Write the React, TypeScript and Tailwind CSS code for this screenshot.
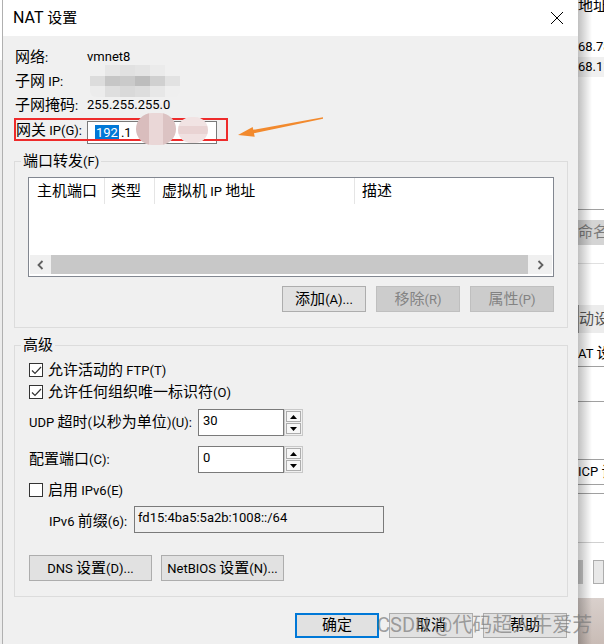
import React from "react";

// CJK runs are drawn a bit larger than latin runs, like YaHei UI next to Segoe UI
const CJK_RE = /([\u2e80-\u9fff\uff00-\uffef]+)/;

function T({ s }: { s: string }) {
  const parts = s.split(CJK_RE).filter((p) => p !== "");
  return (
    <span className="whitespace-pre">
      {parts.map((p, i) =>
        CJK_RE.test(p) ? (
          <span key={i} className="text-[15px]">
            {p}
          </span>
        ) : (
          <span key={i}>{p}</span>
        )
      )}
    </span>
  );
}

interface BtnProps {
  label: string;
  w?: string;
  h?: string;
  disabled?: boolean;
  primary?: boolean;
}

function Btn({ label, w = "w-[84px]", h = "h-[26px]", disabled, primary }: BtnProps) {
  const base = "flex items-center justify-center shrink-0 leading-none";
  const look = disabled
    ? "bg-[#cccccc] border border-[#bfbfbf] text-[#838383]"
    : primary
      ? "bg-[#e1e1e1] border-2 border-[#0078d7]"
      : "bg-[#e1e1e1] border border-[#adadad]";
  return (
    <div className={`${base} ${look} ${w} ${h}`}>
      <T s={label} />
    </div>
  );
}

function Check({ checked }: { checked?: boolean }) {
  return (
    <div className="w-[14px] h-[14px] border border-[#333333] bg-white flex items-center justify-center shrink-0">
      {checked && (
        <svg width="11" height="9" viewBox="0 0 11 9">
          <path d="M1 4.5 L4 7.5 L10 1" fill="none" stroke="#333" strokeWidth="1.2" />
        </svg>
      )}
    </div>
  );
}

function Spin() {
  return (
    <div className="w-[19px] h-[27px] border border-[#c8c8c8] bg-[#f0f0f0] flex flex-col p-[1px] gap-[1px]">
      <div className="flex-1 bg-[#f7f7f7] border border-[#adadad] flex items-center justify-center">
        <svg width="7" height="4" viewBox="0 0 7 4">
          <path d="M0 4 L3.5 0 L7 4 Z" fill="#000" />
        </svg>
      </div>
      <div className="flex-1 bg-[#f7f7f7] border border-[#adadad] flex items-center justify-center">
        <svg width="7" height="4" viewBox="0 0 7 4">
          <path d="M0 0 L7 0 L3.5 4 Z" fill="#000" />
        </svg>
      </div>
    </div>
  );
}

function InfoRow({ label, children }: { label: string; children: React.ReactNode }) {
  return (
    <div className="h-[24px] flex items-center">
      <div className="w-[73px] pl-[1px]">
        <T s={label} />
      </div>
      {children}
    </div>
  );
}

const mosaic = [
  ["#f0f0f0", "#e6e6e6", "#e1e1e1", "#e4e4e4", "#ebebeb", "#f0f0f0"],
  ["#dcdcdc", "#c6c6c6", "#cacaca", "#bdbdbd", "#d0d0d0", "#e2e2e2"],
  ["#ececec", "#dedede", "#d9d9d9", "#dddddd", "#e7e7e7", "#efefef"],
];

function SpinRow({ label, value, className }: { label: string; value: string; className: string }) {
  return (
    <div className={`h-[27px] flex items-center ${className}`}>
      <div className="w-[169px]">
        <T s={label} />
      </div>
      <div className="w-[86px] h-[27px] border border-[#7a7a7a] bg-white pl-[4px] leading-[22px]">{value}</div>
      <Spin />
    </div>
  );
}

function Chevron({ dir }: { dir: "l" | "r" }) {
  return (
    <svg width="7" height="10" viewBox="0 0 7 10">
      <path
        d={dir === "l" ? "M5.5 1 L1.5 5 L5.5 9" : "M1.5 1 L5.5 5 L1.5 9"}
        fill="none"
        stroke="#606060"
        strokeWidth="1.8"
      />
    </svg>
  );
}

function Dialog() {
  return (
    <div className="w-[575px] h-full flex flex-col">
      {/* title bar */}
      <div className="h-[36px] bg-white flex items-center justify-between pl-[10px] pr-[14px] shrink-0">
        <div className="leading-none">
          <span className="text-[16px]">NAT </span>
          <span className="text-[15px]">设置</span>
        </div>
        <svg width="14" height="14" viewBox="0 0 14 14">
          <path d="M1 1 L13 13 M13 1 L1 13" stroke="#000" strokeWidth="1" />
        </svg>
      </div>

      <div className="flex-1 bg-[#f0f0f0] pl-[11px] pr-[10px] flex flex-col">
        {/* network info */}
        <div className="pt-[9px]">
          <InfoRow label="网络:">
            <span>vmnet8</span>
          </InfoRow>
          <InfoRow label="子网 IP:">
            <div className="ml-[3px] w-[90px] h-[32px] flex flex-col rounded-[6px] overflow-hidden">
              {mosaic.map((row, r) => (
                <div key={r} className="flex-1 flex">
                  {row.map((c, i) => (
                    <div key={i} className="flex-1" style={{ background: c }} />
                  ))}
                </div>
              ))}
            </div>
          </InfoRow>
          <InfoRow label="子网掩码:">
            <span>255.255.255.0</span>
          </InfoRow>
          <div className="relative h-[27px] flex">
            <div className="w-[73px] pl-[2px] pt-[3px] leading-[20px]">
              <T s="网关 IP(G):" />
            </div>
            <div className="mt-[4px] w-[130px] h-[23px] border border-[#7a7a7a] bg-white flex items-center pl-[7px]">
              <span className="bg-[#0078d7] text-white leading-[15px] px-[1px]">192</span>
              <span className="ml-[2px]">.1</span>
            </div>
            {/* annotation */}
            <div className="absolute left-0 top-[1px] w-[214px] h-[23px] border-2 border-[#ee2b2b]" />
            <div className="absolute left-[122px] -top-[4px] w-[40px] h-[32px] rounded-full overflow-hidden flex">
              <div className="flex-1 bg-[#d9bdbd]" />
              <div className="flex-1 bg-[#ead7d7]" />
              <div className="flex-1 bg-[#dcc3c3]" />
            </div>
            <div className="absolute left-[164px] top-0 w-[30px] h-[26px] rounded-full overflow-hidden flex flex-col">
              <div className="flex-1 bg-[#f1e3e3]" />
              <div className="flex-1 bg-[#e9d3d3]" />
              <div className="flex-1 bg-[#f0e1e1]" />
            </div>
          </div>
        </div>

        {/* port forwarding */}
        <div className="relative mt-[17px] h-[167px] border border-[#dcdcdc] pt-[15px] pl-[13px] shrink-0">
          <div className="absolute -top-[11px] left-[6px] px-[2px] bg-[#f0f0f0] leading-[20px]">
            <T s="端口转发(F)" />
          </div>
          <div className="w-[526px] h-[100px] border border-[#828790] bg-white flex flex-col">
            <div className="h-[26px] flex">
              <div className="w-[76px] pl-[8px] border-r border-[#e5e5e5] flex items-center">
                <T s="主机端口" />
              </div>
              <div className="w-[50px] pl-[6px] border-r border-[#e5e5e5] flex items-center">
                <T s="类型" />
              </div>
              <div className="w-[200px] pl-[7px] border-r border-[#e5e5e5] flex items-center">
                <T s="虚拟机 IP 地址" />
              </div>
              <div className="flex-1 pl-[7px] flex items-center">
                <T s="描述" />
              </div>
            </div>
            <div className="flex-1" />
            <div className="h-[19px] mb-[2px] mx-[1px] flex bg-[#f0f0f0]">
              <div className="w-[21px] flex items-center justify-center">
                <Chevron dir="l" />
              </div>
              <div className="flex-1 bg-[#c8c8c8]" />
              <div className="w-[24px] flex items-center justify-center">
                <Chevron dir="r" />
              </div>
            </div>
          </div>
          <div className="mt-[9px] w-[526px] flex justify-end gap-[10px]">
            <Btn label="添加(A)..." />
            <Btn label="移除(R)" disabled />
            <Btn label="属性(P)" disabled />
          </div>
        </div>

        {/* advanced */}
        <div className="relative mt-[17px] h-[252px] border border-[#dcdcdc] pl-[14px] pt-[13px] flex flex-col shrink-0">
          <div className="absolute -top-[11px] left-[6px] px-[2px] bg-[#f0f0f0] leading-[20px]">
            <T s="高级" />
          </div>
          <div className="h-[22px] flex items-center gap-[5px]">
            <Check checked />
            <T s="允许活动的 FTP(T)" />
          </div>
          <div className="h-[22px] flex items-center gap-[5px]">
            <Check checked />
            <T s="允许任何组织唯一标识符(O)" />
          </div>
          <SpinRow className="mt-[6px]" label="UDP 超时(以秒为单位)(U):" value="30" />
          <SpinRow className="mt-[10px]" label="配置端口(C):" value="0" />
          <div className="mt-[6px] h-[22px] flex items-center gap-[5px]">
            <Check />
            <T s="启用 IPv6(E)" />
          </div>
          <div className="mt-[5px] h-[27px] flex items-center pl-[20px]">
            <div className="w-[85px] pt-[4px]">
              <T s="IPv6 前缀(6):" />
            </div>
            <div className="w-[250px] h-[27px] border border-[#7a7a7a] bg-[#f0f0f0] pl-[3px] leading-[22px]">
              fd15:4ba5:5a2b:1008::/64
            </div>
          </div>
          <div className="mt-[22px] flex gap-[9px]">
            <Btn label="DNS 设置(D)..." w="w-[123px]" />
            <Btn label="NetBIOS 设置(N)..." w="w-[123px]" />
          </div>
        </div>

        {/* dialog buttons */}
        <div className="mt-[16px] flex justify-end gap-[10px] pr-[1px]">
          <Btn label="确定" h="h-[25px]" primary />
          <Btn label="取消" h="h-[25px]" />
          <Btn label="帮助" h="h-[25px]" />
        </div>
      </div>
    </div>
  );
}

function BackWindow() {
  return (
    <div className="relative w-[26px] h-full bg-white flex flex-col overflow-hidden text-[13px] whitespace-nowrap">
      <div className="h-[14px] flex items-end overflow-hidden">
        <span className="text-[15px] leading-[15px]">地址</span>
      </div>
      <div className="h-[23px]" />
      <div className="h-[20px] leading-[20px]">68.78</div>
      <div className="h-[20px] leading-[20px] bg-[#f0f0f0]">68.11</div>
      <div className="h-[132px]" />
      <div className="h-px bg-[#a0a0a0]" />
      <div className="h-[10px]" />
      <div className="h-[25px] bg-[#d4d4d4] text-[#7a7a7a] flex items-center text-[15px]">命名</div>
      <div className="h-[18px]" />
      <div className="h-px bg-[#e0e0e0]" />
      <div className="h-[41px]" />
      <div className="h-[28px] bg-[#ececec] border-l border-[#999999] text-[#555555] flex items-center text-[15px]">动设</div>
      <div className="h-[8px]" />
      <div className="h-[25px] flex items-center">
        <span className="whitespace-pre">AT </span>
        <span className="text-[15px]">设</span>
      </div>
      <div className="h-px bg-[#a0a0a0]" />
      <div className="h-[34px]" />
      <div className="h-px bg-[#a0a0a0]" />
      <div className="h-[57px]" />
      <div className="h-px bg-[#a0a0a0]" />
      <div className="h-[24px] flex items-center">
        <span className="whitespace-pre">ICP </span>
        <span className="text-[15px]">设</span>
      </div>
      <div className="h-px bg-[#a0a0a0]" />
      <div className="h-[8px]" />
      <div className="h-px bg-[#a0a0a0]" />
      <div className="h-[48px]" />
      <div className="h-px bg-[#d0d0d0]" />
      <div className="h-[17px]" />
      <div className="h-[24px] flex">
        <div className="w-[5px] bg-[#c8c8c8]" />
        <div className="w-[10px]" />
        <div className="flex-1 border border-[#adadad] bg-[#e8e8e8]" />
      </div>
      <div className="h-[14px]" />
      <div className="flex-1 bg-gradient-to-b from-[#d9d0cc] to-[#c9bcb6]" />
      {/* shadow of the dialog */}
      <div className="absolute inset-y-0 left-0 w-[14px] bg-gradient-to-r from-black/25 to-transparent" />
    </div>
  );
}

export default function App() {
  return (
    <div className="relative w-[604px] h-[644px] overflow-hidden flex bg-white text-[13px] text-black font-[family-name:Roboto,'Noto_Sans_CJK_SC',sans-serif]">
      <div className="w-[3px] h-full flex flex-col border-r border-[#b0b0b0]">
        <div className="h-[60px] bg-white" />
        <div className="flex-1 bg-[#ececec]" />
      </div>
      <Dialog />
      <BackWindow />

      {/* orange arrow annotation */}
      <svg className="absolute left-0 top-0 pointer-events-none" width="604" height="644" viewBox="0 0 604 644">
        <polygon points="252,130 323,117.3 323,118.7 253,133.4" fill="#f28a2e" />
        <polygon points="238,135 254.7,136.8 252.7,127" fill="#f28a2e" />
      </svg>

      {/* watermark */}
      <div className="absolute left-[377px] top-[611px] text-[20px] leading-[28px] text-[#7a7a7a]/70 whitespace-nowrap pointer-events-none">
        CSDN @代码超人牛爱芳
      </div>
    </div>
  );
}
